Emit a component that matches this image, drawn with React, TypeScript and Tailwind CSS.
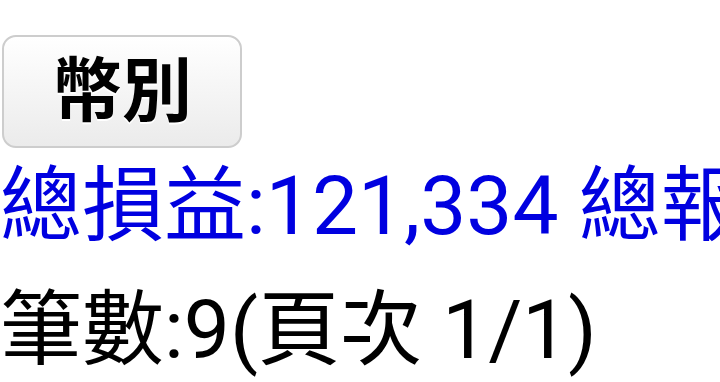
export default function App() {
  return (
    <div className="w-[720px] h-[382px] overflow-hidden bg-white font-['Roboto','Noto_Sans_CJK_TC',sans-serif]">
      <div className="pt-[35px] pl-[2px]">
        <button className="w-[240px] h-[113px] rounded-[14px] border-2 border-[#cdcdcd] bg-gradient-to-b from-white to-[#ebebeb] text-[70px] font-bold text-black leading-none [text-shadow:0_2px_0_#fff]">
          幣別
        </button>
      </div>
      <div className="-mt-[4px] whitespace-nowrap text-[82px] leading-[124px] text-[#0000e0]">
        總損益:121,334 總報酬率:12.5%
      </div>
      <div className="whitespace-nowrap text-[82px] leading-[124px] text-black">
        筆數:9(頁次 1/1)
      </div>
    </div>
  );
}
